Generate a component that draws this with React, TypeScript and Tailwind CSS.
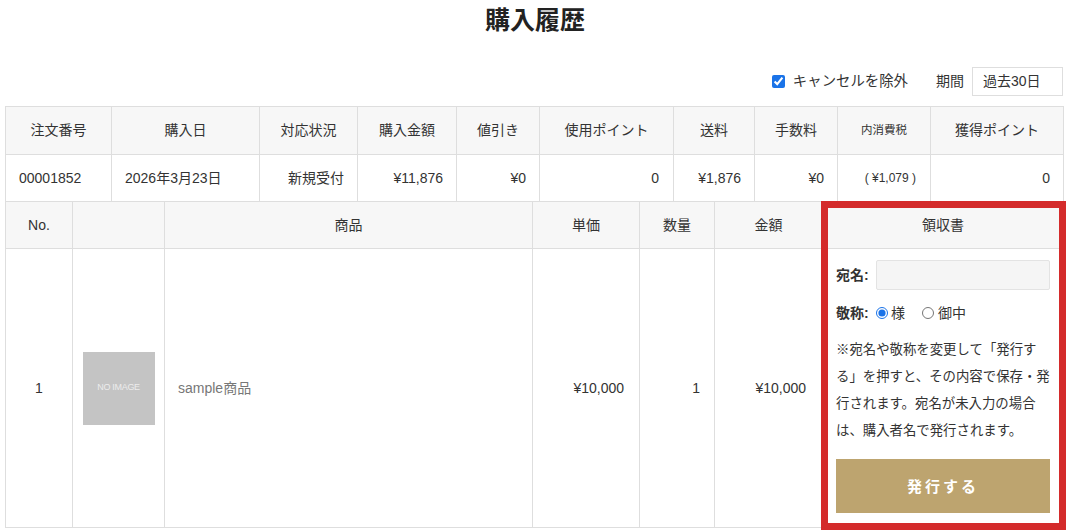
import React from "react";

const h1 = "bg-[#f7f7f7] border-r border-b border-[#dedede] flex items-center justify-center text-[14px] text-[#333]";
const d1 = "border-r border-b border-[#dedede] flex items-center text-[14px] text-[#333]";

export default function App() {
  return (
    <div className="w-[1070px] h-[532px] bg-white text-[#333] font-['Liberation_Sans','Noto_Sans_CJK_JP',sans-serif] overflow-hidden">
      <h1 className="pt-[4px] text-center text-[25px] leading-[28px] font-bold text-[#222] font-['Noto_Sans_CJK_JP',sans-serif]">
        購入履歴
      </h1>

      <div className="mt-[35px] h-[29px] flex justify-end items-center pr-[7px] text-[14px]">
        <label className="flex items-center gap-[8px]">
          <input type="checkbox" defaultChecked className="w-[13px] h-[13px] m-0 accent-[#1a73e8]" />
          <span className="text-[14.4px]">キャンセルを除外</span>
        </label>
        <span className="ml-[28px]">期間</span>
        <div className="ml-[8px] w-[91px] h-[29px] border border-[#dedede] flex items-center pl-[10px]">過去30日</div>
      </div>

      {/* Order table */}
      <div className="ml-[5px] mt-[10px] w-[1059px] grid grid-cols-[106px_148px_98px_99px_83px_134px_81px_83px_93px_133px] border-l border-t border-[#dedede]">
        <div className={`${h1} h-[48px]`}>注文番号</div>
        <div className={`${h1} h-[48px]`}>購入日</div>
        <div className={`${h1} h-[48px]`}>対応状況</div>
        <div className={`${h1} h-[48px]`}>購入金額</div>
        <div className={`${h1} h-[48px]`}>値引き</div>
        <div className={`${h1} h-[48px]`}>使用ポイント</div>
        <div className={`${h1} h-[48px]`}>送料</div>
        <div className={`${h1} h-[48px]`}>手数料</div>
        <div className={`${h1} h-[48px] !text-[11.5px]`}>内消費税</div>
        <div className={`${h1} h-[48px]`}>獲得ポイント</div>

        <div className={`${d1} h-[47px] pl-[13px]`}>00001852</div>
        <div className={`${d1} h-[47px] pl-[13px]`}>2026年3月23日</div>
        <div className={`${d1} h-[47px] justify-end pr-[13px]`}>新規受付</div>
        <div className={`${d1} h-[47px] justify-end pr-[13px]`}>¥11,876</div>
        <div className={`${d1} h-[47px] justify-end pr-[13px]`}>¥0</div>
        <div className={`${d1} h-[47px] justify-end pr-[14px]`}>0</div>
        <div className={`${d1} h-[47px] justify-end pr-[13px]`}>¥1,876</div>
        <div className={`${d1} h-[47px] justify-end pr-[13px]`}>¥0</div>
        <div className={`${d1} h-[47px] justify-end pr-[14px] !text-[12px]`}>( ¥1,079 )</div>
        <div className={`${d1} h-[47px] justify-end pr-[13px]`}>0</div>
      </div>

      {/* Items table */}
      <div className="ml-[5px] w-[1059px] grid grid-cols-[67px_92px_368px_107px_75px_108px_241px] border-l border-[#dedede]">
        <div className={`${h1} h-[47px]`}>No.</div>
        <div className={`${h1} h-[47px]`}></div>
        <div className={`${h1} h-[47px]`}>商品</div>
        <div className={`${h1} h-[47px]`}>単価</div>
        <div className={`${h1} h-[47px]`}>数量</div>
        <div className={`${h1} h-[47px]`}>金額</div>
        <div className={`${h1} h-[47px] col-start-7 row-start-1`}>領収書</div>

        <div className={`${d1} h-[279px] justify-center`}>1</div>
        <div className={`${d1} h-[279px] justify-center`}>
          <div className="w-[72px] h-[73px] bg-[#c4c4c4] flex items-center justify-center text-[9px] text-[#ececec] tracking-[-0.3px]">
            NO IMAGE
          </div>
        </div>
        <div className={`${d1} h-[279px] pl-[13px] !text-[#777]`}>sample商品</div>
        <div className={`${d1} h-[279px] justify-end pr-[15px]`}>¥10,000</div>
        <div className={`${d1} h-[279px] justify-end pr-[14px]`}>1</div>
        <div className={`${d1} h-[279px] justify-end pr-[16px]`}>¥10,000</div>

        <div className="col-start-7 row-start-2 h-[279px] border-r border-b border-[#dedede] px-[13px] pt-[11px] text-[14px] text-[#333]">
          <div className="flex items-center h-[30px]">
            <span className="font-bold w-[40px] shrink-0">宛名:</span>
            <div className="flex-1 h-[30px] bg-[#f5f5f5] border border-[#e3e3e3] rounded-[2px]"></div>
          </div>
          <div className="mt-[13px] h-[20px] flex items-center">
            <span className="font-bold w-[40px] shrink-0">敬称:</span>
            <label className="flex items-center gap-[3px]">
              <input type="radio" name="honor" defaultChecked className="w-[12px] h-[12px] m-0 accent-[#1a73e8]" />
              <span>様</span>
            </label>
            <label className="flex items-center gap-[4px] ml-[17px]">
              <input type="radio" name="honor" className="w-[12px] h-[12px] m-0" />
              <span>御中</span>
            </label>
          </div>
          <p className="mt-[13px] text-[13.4px] leading-[27px] whitespace-nowrap">
            <span className="block">※宛名や敬称を変更して「発行す</span>
            <span className="block">る」を押すと、その内容で保存・発</span>
            <span className="block">行されます。宛名が未入力の場合</span>
            <span className="block">は、購入者名で発行されます。</span>
          </p>
          <button className="mt-[15px] w-full h-[54px] bg-[#bda46f] text-white text-[15px] tracking-[3px] font-bold font-['Noto_Sans_CJK_JP',serif] flex items-center justify-center">
            発行する
          </button>
        </div>

        <div className="col-start-7 row-start-1 row-span-2 relative pointer-events-none z-10">
          <div className="absolute -left-[2px] -right-[2px] -top-[1px] -bottom-[2px] border-[7px] border-[#d42b2b]"></div>
        </div>
      </div>
    </div>
  );
}
